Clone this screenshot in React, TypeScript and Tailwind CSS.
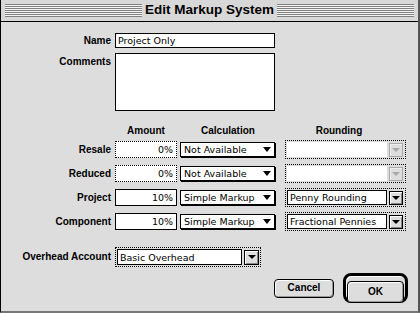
import React from "react"

const label = "font-['Liberation_Sans',Arial,sans-serif] font-bold text-[10px] leading-[12px] text-black"
const field = "font-['DejaVu_Sans',Verdana,sans-serif] text-[9.5px] leading-[13px] text-black"

function Arrow({ big, disabled }: { big?: boolean; disabled?: boolean }) {
  if (big) {
    return <div className="w-0 h-0 border-l-[4px] border-r-[4px] border-t-[5px] border-l-transparent border-r-transparent border-t-black" />
  }
  return (
    <div
      className={
        disabled
          ? "w-0 h-0 border-l-[4px] border-r-[4px] border-t-[4px] border-l-transparent border-r-transparent border-t-[#aaaaaa]"
          : "w-0 h-0 border-l-[4px] border-r-[4px] border-t-[4px] border-l-transparent border-r-transparent border-t-black"
      }
    />
  )
}

function ArrowButton({ disabled, size = 14 }: { disabled?: boolean; size?: number }) {
  return (
    <div
      className={
        (size === 14 ? "w-[14px] h-[14px] " : "w-[15px] h-[15px] ") +
        (disabled
          ? "border border-[#aaaaaa] bg-[#dddddd] shadow-[inset_1px_1px_0_#eeeeee]"
          : "border border-black bg-[#dddddd] shadow-[inset_1px_1px_0_#ffffff,inset_-1px_-1px_0_#888888]") +
        " flex items-center justify-center"
      }
    >
      <Arrow disabled={disabled} />
    </div>
  )
}

function AmountBox({ value, disabled }: { value: string; disabled?: boolean }) {
  return (
    <div
      className={
        "w-[62px] h-[17px] bg-white flex items-center justify-end pr-[3px] " +
        (disabled ? "border border-dotted border-black" : "border border-black") +
        " " + field
      }
    >
      {value}
    </div>
  )
}

function CalcPopup({ value }: { value: string }) {
  return (
    <div className={"self-start mt-[1px] ml-[3px] w-[95px] h-[15px] bg-white border border-black shadow-[1px_1px_0_#000] flex items-center pl-[3px] pr-[3px] " + field}>
      <span className="flex-1">{value}</span>
      <Arrow big />
    </div>
  )
}

function RoundingPopup({ value, disabled }: { value?: string; disabled?: boolean }) {
  return (
    <div className="ml-[10px] w-[121px] h-[19px] border border-dotted border-black p-[1px] flex items-center gap-[2px]">
      <div
        className={
          "w-[100px] h-[15px] bg-white flex items-center pl-[2px] " +
          (disabled ? "" : "border border-black ") + field
        }
      >
        {value}
      </div>
      <ArrowButton disabled={disabled} />
    </div>
  )
}

const rows = [
  { name: "Resale", amount: "0%", disabled: true, calc: "Not Available", rounding: "" },
  { name: "Reduced", amount: "0%", disabled: true, calc: "Not Available", rounding: "" },
  { name: "Project", amount: "10%", disabled: false, calc: "Simple Markup", rounding: "Penny Rounding" },
  { name: "Component", amount: "10%", disabled: false, calc: "Simple Markup", rounding: "Fractional Pennies" },
]

export default function App() {
  return (
    <div className="w-[420px] h-[313px] flex flex-col bg-[#dddddd] border-l border-black border-r-2 border-r-[#555555] border-b-2 border-b-[#777777] overflow-hidden">
      {/* title bar */}
      <div className="h-[22px] shrink-0 bg-[#d8d8d8] border-b border-black flex items-start pt-[4px] px-[4px]">
        <div className="flex-1 h-[13px] bg-[repeating-linear-gradient(to_bottom,#808080_0px,#808080_1px,#f4f4f4_1px,#f4f4f4_2px)]" />
        <div className="px-[3px] -mt-[3px] font-['Liberation_Sans',Arial,sans-serif] font-bold text-[13.5px] leading-[18px] text-black">
          Edit Markup System
        </div>
        <div className="flex-1 h-[13px] bg-[repeating-linear-gradient(to_bottom,#808080_0px,#808080_1px,#f4f4f4_1px,#f4f4f4_2px)]" />
      </div>

      <div className="flex-1 flex flex-col">
        {/* Name */}
        <div className="flex items-center mt-[11px]">
          <div className={"w-[114px] pr-[4px] text-right " + label}>Name</div>
          <div className={"w-[160px] h-[15px] bg-white border border-black flex items-center pl-[2px] " + field}>Project Only</div>
        </div>

        {/* Comments */}
        <div className="flex items-start mt-[5px]">
          <div className={"w-[114px] pr-[4px] pt-[3px] text-right " + label}>Comments</div>
          <div className="w-[160px] h-[58px] bg-white border border-black" />
        </div>

        {/* headers */}
        <div className={"flex mt-[14px] h-[12px] " + label}>
          <div className="w-[114px]" />
          <div className="w-[62px] text-center">Amount</div>
          <div className="ml-[3px] w-[96px] text-center">Calculation</div>
          <div className="ml-[12px] w-[102px] text-center">Rounding</div>
        </div>

        {/* rows */}
        <div className="flex flex-col gap-[7px] mt-[4px]">
          {rows.map((r) => (
            <div key={r.name} className="flex items-center h-[17px]">
              <div className={"w-[114px] pr-[4px] text-right " + label}>{r.name}</div>
              <AmountBox value={r.amount} disabled={r.disabled} />
              <CalcPopup value={r.calc} />
              <RoundingPopup value={r.rounding} disabled={r.disabled} />
            </div>
          ))}
        </div>

        {/* Overhead */}
        <div className="flex items-center mt-[17px]">
          <div className={"w-[114px] pr-[4px] text-right " + label}>Overhead Account</div>
          <div className="w-[146px] h-[20px] border border-dotted border-black p-[1px] flex items-center gap-[2px]">
            <div className={"w-[125px] h-[16px] bg-white border border-black flex items-center pl-[2px] " + field}>Basic Overhead</div>
            <ArrowButton size={15} />
          </div>
        </div>

        {/* buttons */}
        <div className="flex justify-end items-center gap-[9px] mt-[6px] pr-[10px]">
          <button className={"w-[60px] h-[19px] rounded-[4px] border border-black bg-[#dddddd] shadow-[inset_1px_1px_0_#ffffff,inset_-1px_-1px_0_#999999] " + label}>
            Cancel
          </button>
          <div className="w-[65px] h-[30px] rounded-[8px] border-[3px] border-black p-[1px] bg-[#dddddd] shadow-[inset_1px_1px_0_#ffffff]">
            <button className={"w-full h-full rounded-[4px] border border-black bg-[#dddddd] shadow-[inset_1px_1px_0_#ffffff,inset_-1px_-1px_0_#999999] " + label}>
              OK
            </button>
          </div>
        </div>
      </div>
    </div>
  )
}
